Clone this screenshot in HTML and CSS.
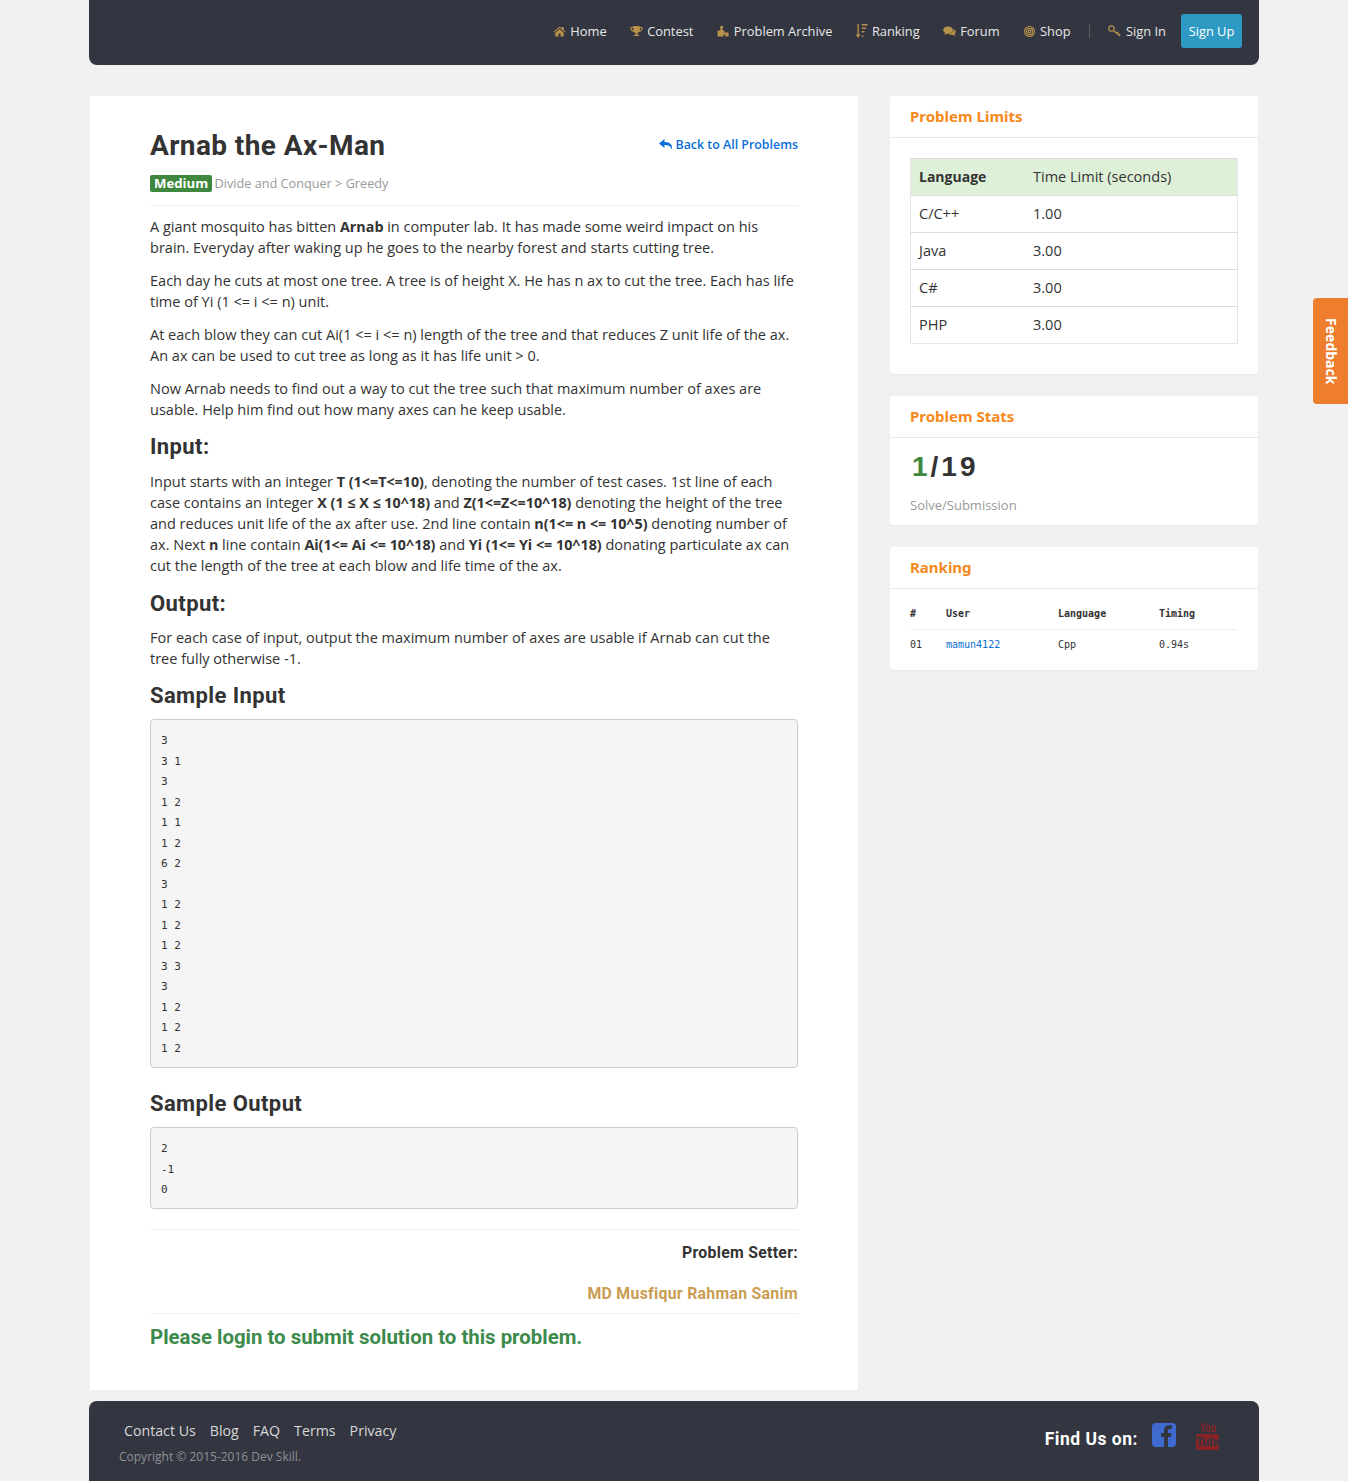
FILE: index.html
```html
<!DOCTYPE html>
<html lang="en">
<head>
<meta charset="utf-8">
<title>Arnab the Ax-Man</title>
<link rel="stylesheet" href="styles.css">
</head>
<body>
<div class="wrap">
  <header class="nav">
    <a class="nav-item"><svg class="ic" viewBox="0 0 14 12"><path d="M7 0.5 0.3 6.3l.7.8L7 2l6 5.1.7-.8L11.500 4.400V1h-2v1.700zM2.500 7.300V11.500h3.300V8.200h2.400v3.300h3.300V7.300L7 3.400z"/></svg>Home</a>
    <a class="nav-item"><svg class="ic" viewBox="0 0 14 12"><path d="M3.500 0h7v1.200H13.500V3c0 1.800-1.500 3-3.300 3.200C9.700 7 9 7.400 8 7.600V9.500h1.800V11H4.200V9.500H6V7.600C5 7.400 4.300 7 3.800 6.200 2 6 .5 4.800.5 3V1.200h3zM1.700 2.300V3c0 .9.700 1.600 1.800 1.900V2.300zm9 0v2.600c1-.3 1.600-1 1.600-1.900v-.7z"/></svg>Contest</a>
    <a class="nav-item"><svg class="ic" viewBox="0 0 14 12"><path d="M3.500 0h3v3H5.800v1.500H8V7h4.500v4.500H9V9.200H7v2.300H.5V5h3z"/></svg>Problem Archive</a>
    <a class="nav-item"><svg class="ic ic-tall" viewBox="0 0 12 14"><path d="M2 0h1.300v10.500H5L2.600 14 .3 10.500H2zM6.300 0H12v1.500H6.300zM6.300 3.500H10.500V5H6.300zM6.300 7H9V8.500H6.300zM6.300 11.500H8V13H6.300z"/></svg>Ranking</a>
    <a class="nav-item"><svg class="ic" viewBox="0 0 14 12"><ellipse cx="5.500" cy="4.500" rx="5.300" ry="3.900"/><path d="M2.500 7 1.500 10 5 8z"/><path d="M11.700 3.300c1.300.7 2.100 1.800 2.100 3 0 1-.5 1.800-1.300 2.400l.8 2.300L10 9.600c-1.600.2-3.300-.2-4.200-1.100 3 0 6-1.700 5.900-5.200z"/></svg>Forum</a>
    <a class="nav-item"><svg class="ic ic-round" viewBox="0 0 12 12"><circle cx="6" cy="6" r="5.400" class="ring"/><circle cx="6" cy="6" r="3.400" class="ring"/><circle cx="6" cy="6" r="1.500" class="ring"/></svg>Shop</a>
    <span class="nav-sep"></span>
    <a class="nav-item nav-signin"><svg class="ic ic-key" viewBox="0 0 14 12"><circle cx="3.500" cy="3.500" r="2.700" class="ring"/><path d="M5.500 5.500 12 11M9 8.500l1.500-1.500M11 10.200l1.200-1.200" class="ring"/></svg>Sign In</a>
    <a class="btn-signup">Sign Up</a>
  </header>

  <div class="layout">
    <main class="main">
      <div class="title-row">
        <h1 class="title">Arnab the Ax-Man</h1>
        <a class="back"><svg class="back-ic" viewBox="0 0 14 11"><path d="M5.500 0 0 4.500 5.500 9V6c3.500 0 6 .6 7.300 4.500C13.800 6.500 11.500 3 5.500 3z"/></svg>Back to All Problems</a>
      </div>
      <div class="meta"><span class="badge">Medium</span> Divide and Conquer &gt; Greedy</div>
      <p>A giant mosquito has bitten <b>Arnab</b> in computer lab. It has made some weird impact on his brain. Everyday after waking up he goes to the nearby forest and starts cutting tree.</p>
      <p>Each day he cuts at most one tree. A tree is of height X. He has n ax to cut the tree. Each has life time of Yi (1 &lt;= i &lt;= n) unit.</p>
      <p>At each blow they can cut Ai(1 &lt;= i &lt;= n) length of the tree and that reduces Z unit life of the ax. An ax can be used to cut tree as long as it has life unit &gt; 0.</p>
      <p>Now Arnab needs to find out a way to cut the tree such that maximum number of axes are usable. Help him find out how many axes can he keep usable.</p>
      <h3 class="sec sec-input">Input:</h3>
      <p>Input starts with an integer <b>T (1&lt;=T&lt;=10)</b>, denoting the number of test cases. 1st line of each case contains an integer <b>X (1 ≤ X ≤ 10^18)</b> and <b>Z(1&lt;=Z&lt;=10^18)</b> denoting the height of the tree and reduces unit life of the ax after use. 2nd line contain <b>n(1&lt;= n &lt;= 10^5)</b> denoting number of ax. Next <b>n</b> line contain <b>Ai(1&lt;= Ai &lt;= 10^18)</b> and <b>Yi (1&lt;= Yi &lt;= 10^18)</b> donating particulate ax can cut the length of the tree at each blow and life time of the ax.</p>
      <h3 class="sec">Output:</h3>
      <p>For each case of input, output the maximum number of axes are usable if Arnab can cut the tree fully otherwise -1.</p>
      <h3 class="sec sec-sample">Sample Input</h3>
      <pre class="code">3
3 1
3
1 2
1 1
1 2
6 2
3
1 2
1 2
1 2
3 3
3
1 2
1 2
1 2</pre>
      <h3 class="sec sec-sample">Sample Output</h3>
      <pre class="code">2
-1
0</pre>
      <div class="setter">
        <div class="setter-label">Problem Setter:</div>
        <div class="setter-name">MD Musfiqur Rahman Sanim</div>
      </div>
      <div class="login">Please login to submit solution to this problem.</div>
    </main>

    <aside class="side">
      <section class="card card-limits">
        <h4 class="card-title">Problem Limits</h4>
        <div class="card-body">
          <table class="limits">
            <tr class="limits-head"><th>Language</th><td>Time Limit (seconds)</td></tr>
            <tr><td>C/C++</td><td>1.00</td></tr>
            <tr><td>Java</td><td>3.00</td></tr>
            <tr><td>C#</td><td>3.00</td></tr>
            <tr><td>PHP</td><td>3.00</td></tr>
          </table>
        </div>
      </section>
      <section class="card">
        <h4 class="card-title">Problem Stats</h4>
        <div class="stats">
          <div class="ratio"><span class="solved">1</span>/19</div>
          <div class="ratio-label">Solve/Submission</div>
        </div>
      </section>
      <section class="card">
        <h4 class="card-title">Ranking</h4>
        <div class="rank-body">
          <table class="rank">
            <tr><th class="c1">#</th><th class="c2">User</th><th class="c3">Language</th><th>Timing</th></tr>
            <tr><td>01</td><td><a class="rank-user">mamun4122</a></td><td>Cpp</td><td>0.94s</td></tr>
          </table>
        </div>
      </section>
    </aside>
  </div>

  <footer class="foot">
    <div class="foot-left">
      <nav class="foot-links"><a>Contact Us</a><a>Blog</a><a>FAQ</a><a>Terms</a><a>Privacy</a></nav>
      <div class="copy">Copyright © 2015-2016 Dev Skill.</div>
    </div>
    <div class="foot-right">
      <span class="find">Find Us on:</span>
      <svg class="fb" viewBox="0 0 24 24"><rect width="24" height="24" rx="4" fill="#3f6bd0"/><path fill="#333640" d="M16 24V14h3l.5-4H16V8c0-1.200.4-2 2-2h2V2.500C19.500 2.400 18.300 2.300 17 2.300c-3 0-5 1.800-5 5V10H9v4h3v10z"/></svg>
      <span class="yt"><span class="yt-you">You</span><span class="yt-tube">Tube</span></span>
    </div>
  </footer>
</div>
<a class="feedback">Feedback</a>
</body>
</html>
```
FILE: styles.css
```css
* { box-sizing: border-box; }
html, body { margin: 0; padding: 0; }
body {
  background: #f1f1f1;
  font-family: "Open Sans", "Noto Sans", sans-serif;
  font-size: 14.530px;
  line-height: 21px;
  color: #333;
  position: relative;
}
.wrap { width: 1170px; margin: 0 auto; }

.nav {
  height: 65px;
  background: #333640;
  border-radius: 0 0 8px 8px;
  display: flex;
  align-items: center;
  justify-content: flex-end;
  padding: 0 17px 3px 0;
  color: #e8e8e8;
  font-size: 12.850px;
}
.nav-item { display: flex; align-items: center; margin-right: 23.500px; white-space: nowrap; }
.ic { width: 13px; height: 11px; fill: #b8924a; margin-right: 4px; }
.ic-tall { height: 14px; margin-left: -1px; }
.ic-round, .ic-key { fill: none; }
.ic-key { width: 14px; height: 12px; }
.ring { stroke: #b8924a; stroke-width: 1.200; }
.nav-sep { width: 1px; height: 14px; background: #5c5e66; margin-right: 18px; margin-left: -5px; }
.nav-signin { margin-right: 15px; }
.btn-signup {
  background: #2e9ac4;
  color: #fff;
  border-radius: 3px;
  height: 34px;
  width: 61px;
  display: flex;
  align-items: center;
  justify-content: center;
}

.layout {
  display: grid;
  grid-template-columns: 768px 368px;
  column-gap: 32px;
  padding: 31px 1px 0;
  align-items: start;
}
.main {
  background: #fff;
  padding: 32px 60px 28px;
  height: 1294px;
}
.title-row { display: flex; justify-content: space-between; align-items: flex-start; }
.title {
  margin: 1px 0 -1px;
  font-family: Roboto, sans-serif;
  font-size: 28px;
  line-height: 34px;
  font-weight: 700;
  letter-spacing: .4px;
  color: #333;
}
.back { color: #0a6fd6; font-size: 12.400px; font-weight: 600; display: flex; align-items: center; margin-top: 6px; }
.back-ic { width: 14px; height: 11px; fill: #0a6fd6; margin-right: 2px; }
.meta {
  color: #999;
  font-size: 12.700px;
  margin-top: 11px;
  padding-bottom: 11px;
  border-bottom: 1px solid #eee;
  margin-bottom: 10px;
}
.badge {
  display: inline-block;
  background: #3f873f;
  color: #fff;
  font-weight: 700;
  font-size: 13.200px;
  line-height: 17px;
  padding: 0 4px;
  border-radius: 2px;
  margin-right: -1px;
}
p { margin: 0 0 12px; }
b { font-weight: 700; font-size: 14.300px; }
.sec {
  margin: 14px 0 9.500px;
  font-family: Roboto, sans-serif;
  font-size: 22px;
  line-height: 28px;
  font-weight: 700;
  letter-spacing: .4px;
  color: #333;
}
.sec-input { margin-top: 13px; }
.sec-sample { margin: 13px 0 9px; }
.code {
  margin: 0 0 22px;
  padding: 11px 10px 7.500px;
  background: #f5f5f5;
  border: 1px solid #ccc;
  border-radius: 4px;
  font-family: "DejaVu Sans Mono", monospace;
  font-size: 11px;
  line-height: 20.530px;
  color: #333;
}
.setter { border-top: 1px solid #eee; text-align: right; padding-top: 12px; margin-top: -2px; }
.setter-label { font-family: Roboto, sans-serif; font-weight: 700; font-size: 15.800px; letter-spacing: .3px; color: #333; }
.setter-name {
  font-family: Roboto, sans-serif;
  font-weight: 700;
  font-size: 15.800px;
  letter-spacing: .3px;
  color: #c99d52;
  margin-top: 20px;
  padding-bottom: 9px;
  border-bottom: 1px solid #eee;
}
.login {
  font-family: Roboto, sans-serif;
  font-weight: 700;
  font-size: 20.400px;
  line-height: 28px;
  color: #3c8a4c;
  margin-top: 9px;
}

.side { display: flex; flex-direction: column; gap: 22px; }
.card { background: #fff; border-radius: 3px; box-shadow: 0 1px 2px rgba(0,0,0,.04); }
.card-limits { height: 278px; }
.card-title {
  margin: 0;
  height: 42px;
  padding: 10px 20px 0;
  border-bottom: 1px solid #e8e8e8;
  font-family: "Noto Sans", sans-serif;
  font-size: 15px;
  line-height: 21px;
  font-weight: 700;
  color: #f5891c;
}
.card-body { padding: 20px; }
.limits { width: 100%; border-collapse: collapse; border: 1px solid #e6e6e6; }
.limits th, .limits td {
  text-align: left;
  height: 37px;
  padding: 0 8px 2px;
  border-top: 1px solid #ddd;
}
.limits tr > :first-child { width: 114.500px; }
.limits-head th { font-size: 14px; }
.limits-head { background: #dff0d8; }
.stats { padding: 12px 20px 10px; }
.ratio {
  font-family: "Liberation Sans", sans-serif;
  font-weight: 700;
  font-size: 28px;
  line-height: 34px;
  letter-spacing: 3px;
  padding-left: 2px;
  color: #333;
}
.solved { color: #3f873f; }
.ratio-label { color: #999; font-size: 13px; margin-top: 11px; line-height: 20px; }
.rank-body { padding: 8px 21px 12px 20px; }
.rank { width: 100%; border-collapse: collapse; font-family: "DejaVu Sans Mono", monospace; font-size: 10px; color: #333; }
.rank th { text-align: left; font-weight: 700; height: 32px; padding: 2px 0 0; border-bottom: 1px solid #eee; }
.rank td { height: 29px; padding: 2px 0 0; }
.rank .c1 { width: 36px; }
.rank .c2 { width: 112px; }
.rank .c3 { width: 101px; }
.rank-user { color: #0a6fd6; }

.foot {
  margin-top: 11px;
  height: 80px;
  background: #333640;
  border-radius: 8px 8px 0 0;
  display: flex;
  justify-content: space-between;
  padding: 0 40px 0 30px;
  color: #ddd;
}
.foot-links { display: flex; gap: 14px; padding: 19px 0 0 5px; font-size: 14.200px; color: #d8d8d8; }
.copy { font-size: 12px; color: #8f9096; margin-top: 5px; }
.foot-right { display: flex; align-items: flex-start; padding-top: 22px; }
.find { font-family: Roboto, sans-serif; font-weight: 700; font-size: 17.500px; letter-spacing: .5px; color: #fff; margin: 6px 14px 0 0; }
.fb { width: 24px; height: 24px; margin-right: 20px; }
.yt { display: flex; flex-direction: column; align-items: center; width: 23px; color: #8a2326; margin-top: -1px; }
.yt-you { font-family: "Liberation Sans", sans-serif; font-size: 12px; line-height: 12px; font-weight: 700; transform: scaleX(.75); }
.yt-tube { background: #8a2326; color: #333640; border-radius: 3px; font-family: "Liberation Sans", sans-serif; font-size: 12px; line-height: 16px; font-weight: 700; width: 23px; text-align: center; letter-spacing: -.5px; }

.feedback {
  position: absolute;
  top: 298px;
  right: 0;
  width: 35px;
  height: 106px;
  background: #ee7d2e;
  border-radius: 4px 0 0 4px;
  color: #fff;
  font-family: "Noto Sans", sans-serif;
  font-weight: 700;
  font-size: 14px;
  writing-mode: vertical-rl;
  display: flex;
  align-items: center;
  justify-content: center;
  padding-left: 2px;
}
```
